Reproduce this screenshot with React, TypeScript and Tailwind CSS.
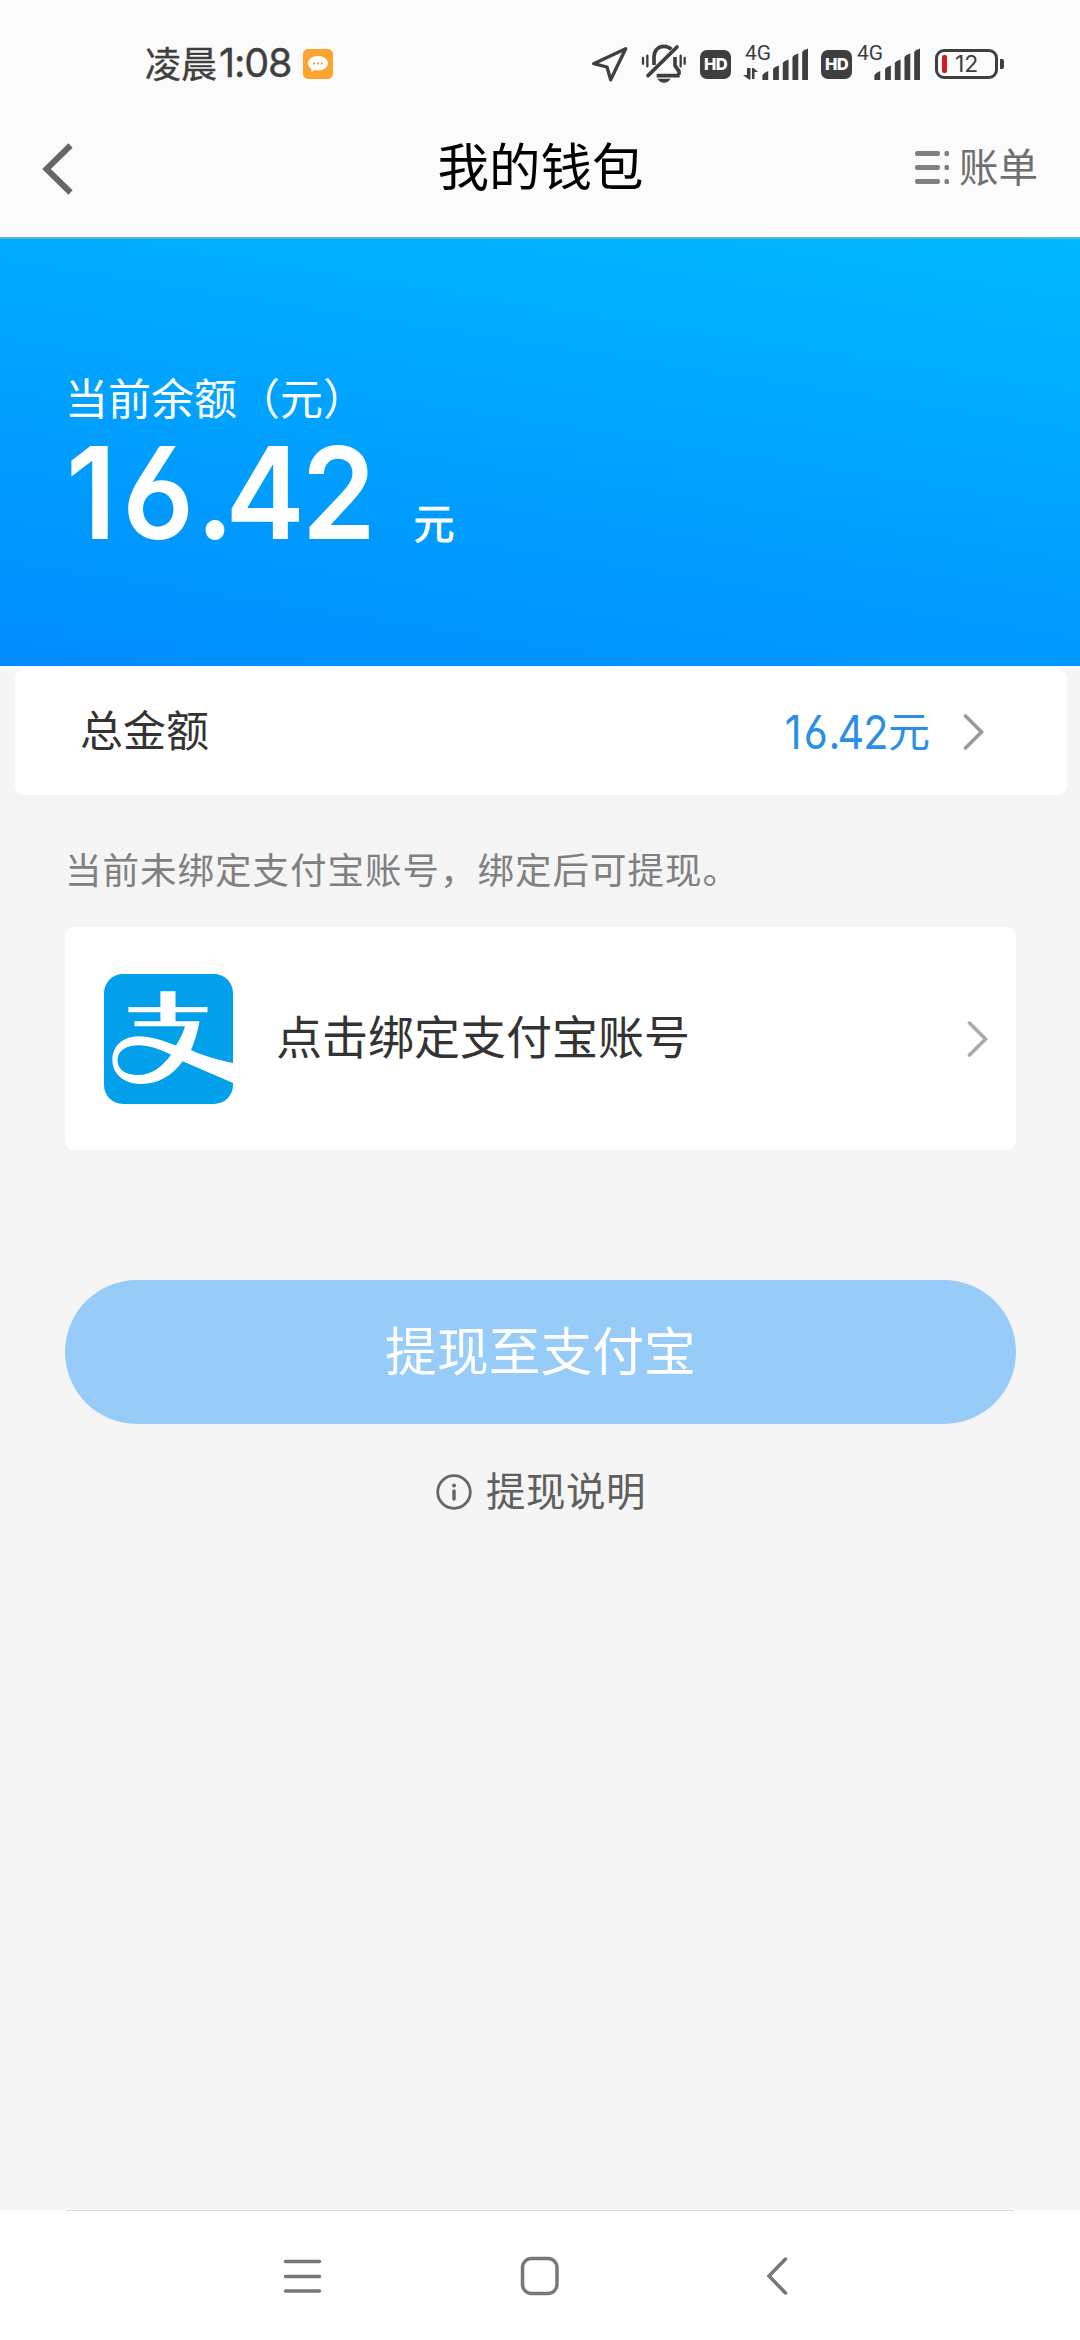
import { clsx } from "clsx";

const cjk = "font-['Noto_Sans_CJK_SC',sans-serif]";
const digits = "font-['Inter','Noto_Sans_CJK_SC',sans-serif] [font-feature-settings:'cv03']";

function LocationIcon() {
  return (
    <svg width="40" height="40" viewBox="60 45 120 120" className="shrink-0">
      <path d="M71 104 L167 59 L122 152 L111 114 Z" fill="none" stroke="#3f3f3f" strokeWidth="10" strokeLinejoin="round" />
    </svg>
  );
}

function MutedBellIcon() {
  return (
    <svg width="46" height="40" viewBox="213 45 138 120" className="shrink-0">
      <g fill="none" stroke="#3f3f3f" strokeLinecap="round" strokeLinejoin="round">
        <path d="M219 87v17M232 80v32M332 80v32M344 87v17" strokeWidth="7" />
        <path d="M252 108V84c0-20 13-32 30-32 9 0 16 3 22 9M315 84v26l12 17v10M260 140h69" strokeWidth="11" strokeLinecap="butt" />
        <path d="M234 140L321 54" strokeWidth="11" />
      </g>
      <path d="M262 149h40c-5 8-12 12-20 12s-15-4-20-12z" fill="#3f3f3f" />
    </svg>
  );
}

function HdBadge() {
  return (
    <div className="flex h-[29px] w-[31px] shrink-0 items-center justify-center rounded-[7px] bg-[#3f3f3f] font-['Inter',sans-serif] text-[16.5px] leading-none font-extrabold tracking-[-0.6px] text-white">
      HD
    </div>
  );
}

function Signal({ data }: { data?: boolean }) {
  return (
    <div className="relative h-[36px] w-[65px] shrink-0">
      <span className="absolute top-[-1px] left-[2px] font-['Roboto',sans-serif] text-[21px] leading-none text-[#3f3f3f]">4G</span>
      <svg width="65" height="36" viewBox="0 0 65 36" className="absolute inset-0" fill="#3f3f3f">
        {data ? <path d="M4 24v7h-4l6 4.5h1.500V24zM9 24v11h2.500v-7H15l-4.500-4z" /> : null}
        <path d="M20 31.500q0-2 6-4.500v9h-6zM31 25.500q0-2 6-4v14.500h-6zM41 19.500q0-2 6-4V36h-6zM51 13.500q0-2 6-4V36h-6zM61 8.500q0-2 6-4V36h-6z" transform="scale(.97 1)" />
      </svg>
    </div>
  );
}

function StatusBar() {
  return (
    <div className="flex h-[128px] shrink-0 items-center pl-[145px] text-[#3f3f3f]">
      <span className={clsx(cjk, "mb-[5px] text-[36px] leading-none [-webkit-text-stroke:0.4px_#3f3f3f]")}>凌晨</span>
      <span className={clsx(digits, "ml-[2px] w-[74px] text-[39.5px] leading-none whitespace-nowrap tracking-[-1.1px] [-webkit-text-stroke:0.4px_#3f3f3f]")}>1:08</span>
      <svg width="30" height="30" viewBox="0 0 30 30" className="ml-[10px] shrink-0">
        <rect width="30" height="30" rx="5" fill="#fba42f" />
        <path d="M15 7c5.600 0 10 3.200 10 7.300s-4.400 7.200-10 7.200c-1 0-2-.1-3-.4L8 23l.6-3C6.400 18.700 5 16.600 5 14.300 5 10.200 9.400 7 15 7z" fill="#fff" />
        <path d="M10 13.500h2v2h-2zM14 13.500h2v2h-2zM18 13.500h2v2h-2z" fill="#fba42f" />
      </svg>
      <div className="ml-[257px] flex items-center">
        <LocationIcon />
        <div className="ml-[11px] flex">
          <MutedBellIcon />
        </div>
        <div className="ml-[13px] flex">
          <HdBadge />
        </div>
        <div className="mb-[4px] ml-[12px] flex">
          <Signal data />
        </div>
        <div className="ml-[13px] flex">
          <HdBadge />
        </div>
        <div className="mb-[4px] ml-[3px] flex">
          <Signal />
        </div>
        <div className="ml-[15px] flex h-[30px] w-[63px] items-center rounded-[9px] border-3 border-[#3f3f3f] pl-[4px]">
          <span className="h-[18px] w-[5px] rounded-[2px] bg-[#e0151d]" />
          <span className={clsx(digits, "ml-[8px] text-[23px] leading-none")}>12</span>
        </div>
        <span className="ml-[2px] h-[10px] w-[4px] rounded-r-[2px] bg-[#3f3f3f]" />
      </div>
    </div>
  );
}

function Header() {
  return (
    <header className="flex h-[111px] shrink-0 items-start justify-between border-b-2 border-[#5cb4d8] pr-[42px] pl-[42px]">
      <svg width="32" height="56" viewBox="0 0 32 56" className="mt-[13px]">
        <path d="M28.500 4.500L4.500 28L28.500 51.500" fill="none" stroke="#666" strokeWidth="6" />
      </svg>
      <h1 className={clsx(cjk, "mt-[8px] ml-[92px] text-[51.5px] leading-[56px] text-black")}>我的钱包</h1>
      <div className="mt-[11px] flex items-center">
        <svg width="34" height="33" viewBox="0 0 34 33" className="mt-[4px] mr-[10px]" fill="#808080">
          <rect width="25" height="5" rx="2" />
          <rect y="14" width="25" height="5" rx="2" />
          <rect y="28" width="25" height="5" rx="2" />
          <rect x="29.500" width="4.500" height="5" rx="1.500" />
          <rect x="29.500" y="14" width="4.500" height="5" rx="1.500" />
          <rect x="29.500" y="28" width="4.500" height="5" rx="1.500" />
        </svg>
        <span className={clsx(cjk, "text-[39.5px] leading-[52px] text-[#6f6f6f]")}>账单</span>
      </div>
    </header>
  );
}

function Chevron({ color }: { color: string }) {
  return (
    <svg width="22" height="38" viewBox="0 0 22 38" className="shrink-0">
      <path d="M2.500 3L18.500 19L2.500 35" fill="none" stroke={color} strokeWidth="3.600" strokeLinecap="round" />
    </svg>
  );
}

function AlipayLogo() {
  return (
    <svg width="129" height="130" viewBox="0 0 129 130" className="shrink-0">
      <rect width="129" height="130" rx="19" fill="#02a0ea" />
      <path
        fill="#fff"
        fillRule="evenodd"
        d="M56.400 17.300H71.500V33H103.500V38.300H71.500V47.300H95.500C94 57 91 67 87 76C96 80.500 113 86 129 89V109L78.700 87.300C68 102 54 110 37 110C20 110 8.400 100 8.400 86C8.400 71 20 62.300 35 62.300C46 62.300 57 66 72 71.500C76 65 79 59 81 52.300H30.500V47.300H56.400V38.300H24.400V33H56.400ZM67 80.700C55 75 45 71.300 35 71.300C22 71.300 13.500 77 13.500 86C13.500 95 21 101 34 101C48 101 58 93 67 80.700Z"
      />
    </svg>
  );
}

// kerning differs per digit, the figures are slightly condensed
function Amount({ className }: { className: string }) {
  return (
    <span className={clsx(digits, "inline-block whitespace-nowrap", className)}>
      <span className="tracking-[0.05em]">1</span>
      <span className="tracking-[0.015em]">6</span>
      <span className="tracking-[-0.07em]">.</span>
      <span className="tracking-[-0.025em]">4</span>
      <span>2</span>
    </span>
  );
}

function Balance() {
  return (
    <section className="flex h-[427px] shrink-0 flex-col bg-[linear-gradient(189deg,#00b8ff,#008cff)] pl-[65px] text-white">
      <p className={clsx(cjk, "mt-[127px] text-[43px] leading-[60px]")}>当前余额（元）</p>
      <div className="mt-[2px] flex items-baseline">
        <Amount className="ml-px origin-left scale-x-93 text-[128px] leading-[130px] font-[560]" />
        <span className={clsx(cjk, "ml-[14px] text-[41px] leading-none [-webkit-text-stroke:0.8px_#fff]")}>元</span>
      </div>
    </section>
  );
}

function NavBar() {
  return (
    <nav className="flex h-[130px] shrink-0 flex-col bg-white px-[66px]">
      <div className="h-px bg-[#ddd]" />
      <div className="flex flex-1 items-center pl-[216px]">
        <svg width="40" height="40" viewBox="0 0 40 40" fill="none" stroke="#777" strokeWidth="3.500" strokeLinecap="round">
          <path d="M3.500 5.500H37.500M3.500 20.500H37.500M3.500 35H37.500" />
        </svg>
        <svg width="40" height="40" viewBox="0 0 40 40" className="ml-[198px]" fill="none" stroke="#777" strokeWidth="3.500">
          <rect x="2.500" y="2.500" width="34.500" height="35" rx="9" />
        </svg>
        <svg width="24" height="40" viewBox="0 0 24 40" className="ml-[205px]" fill="none" stroke="#777" strokeWidth="3.500" strokeLinecap="round">
          <path d="M20.500 3L4 20L20.500 37" />
        </svg>
      </div>
    </nav>
  );
}

export default function App() {
  return (
    <div className="flex h-[2340px] w-[1080px] flex-col overflow-hidden bg-[#f5f5f5]">
      <div className="flex flex-col bg-[#fbfbfb]">
        <StatusBar />
        <Header />
      </div>
      <Balance />
      <div className="h-[3px] shrink-0 bg-[#f8fdff]" />
      <main className={clsx(cjk, "flex flex-1 flex-col text-[#333]")}>
        <div className="mr-[13px] ml-[15px] flex h-[126px] items-center rounded-[9px] bg-white pr-[82px] pl-[65px]">
          <span className="mb-[7px] text-[43px] leading-none">总金额</span>
          <div className="ml-auto flex items-center text-[#2b8fe8]">
            <Amount className="origin-right scale-x-89 text-[46.5px] leading-none" />
            <span className="mb-[7px] text-[42px] leading-none">元</span>
          </div>
          <div className="ml-[33px] flex">
            <Chevron color="#999" />
          </div>
        </div>

        <p className="mt-[47px] ml-[65px] text-[36.5px] leading-[54px] tracking-[1px] text-[#808080]">当前未绑定支付宝账号，绑定后可提现。</p>

        <div className="mt-[31px] mr-[64px] ml-[65px] flex h-[223px] items-center rounded-[9px] bg-white pr-[27px] pl-[39px]">
          <AlipayLogo />
          <span className="mb-[9px] ml-[43px] flex-1 text-[46px] leading-none">点击绑定支付宝账号</span>
          <Chevron color="#aaa" />
        </div>

        <button type="button" className="mt-[130px] mr-[64px] ml-[65px] h-[144px] rounded-full bg-[#97cbf8] pb-[7px] text-[51.8px] leading-none text-white">
          提现至支付宝
        </button>

        <div className="mt-[38px] flex items-center justify-center pl-[2px] text-[#5f5f5f]">
          <svg width="36" height="36" viewBox="0 0 36 36" className="mr-[14px]">
            <circle cx="18" cy="18" r="16.300" fill="none" stroke="#666" strokeWidth="2.800" />
            <circle cx="18" cy="11.500" r="2" fill="#666" />
            <path d="M18 17v8" stroke="#666" strokeWidth="3.500" strokeLinecap="round" />
          </svg>
          <span className="mb-[5px] text-[39.5px] leading-[54px] tracking-[0.5px]">提现说明</span>
        </div>
      </main>
      <NavBar />
    </div>
  );
}
